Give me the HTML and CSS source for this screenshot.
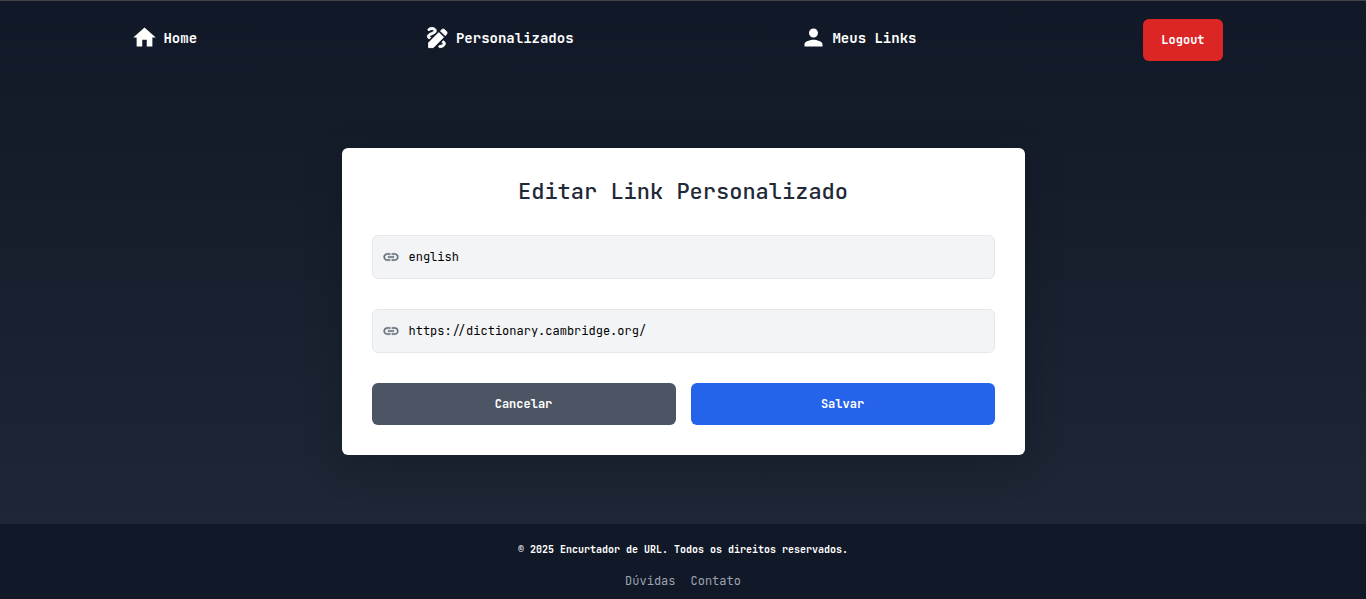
FILE: index.html
```
<!DOCTYPE html>
<html lang="pt-BR">
<head>
<meta charset="utf-8">
<meta name="viewport" content="width=device-width, initial-scale=1">
<title>Editar Link Personalizado</title>
<link rel="stylesheet" href="styles.css">
</head>
<body>
<header class="navbar">
  <nav class="nav">
    <a class="nav-link" href="#">
      <svg class="nav-icon" viewBox="0 0 24 24" aria-hidden="true"><path d="M10 20v-6h4v6h5v-8h3L12 3 2 12h3v8z"/></svg>
      Home
    </a>
    <a class="nav-link" href="#">
      <svg class="nav-icon nav-icon-bold" viewBox="0 0 24 24" aria-hidden="true"><path d="M18.85 10.39l1.06-1.06c.78-.78.78-2.05 0-2.83L18.5 5.09c-.78-.78-2.05-.78-2.83 0l-1.06 1.06 4.24 4.24zM13.19 7.57L4 16.76V21h4.24l9.19-9.19-4.24-4.24zM19 17.5c0 2.19-2.54 3.5-5 3.5-.55 0-1-.45-1-1s.45-1 1-1c1.54 0 3-.73 3-1.5 0-.47-.48-.87-1.23-1.2l1.48-1.48c1.07.63 1.75 1.47 1.75 2.68zM4.58 13.35C3.61 12.79 3 12.06 3 11c0-1.8 1.89-2.63 3.56-3.36C7.59 7.18 9 6.56 9 6c0-.41-.78-1-2-1-1.26 0-1.8.61-1.83.64-.35.41-.98.46-1.4.12-.41-.34-.49-.95-.15-1.38C3.73 4.24 4.76 3 7 3s4 1.32 4 3c0 1.87-1.93 2.72-3.64 3.47C6.42 9.88 5 10.5 5 11c0 .31.43.6 1.07.86l-1.49 1.49z"/></svg>
      Personalizados
    </a>
    <a class="nav-link" href="#">
      <svg class="nav-icon" viewBox="0 0 24 24" aria-hidden="true"><path d="M12 12c2.21 0 4-1.79 4-4s-1.79-4-4-4-4 1.790-4 4 1.790 4 4 4zm0 2c-2.670 0-8 1.340-8 4v2h16v-2c0-2.660-5.330-4-8-4z"/></svg>
      Meus Links
    </a>
    <button class="button button-danger" type="button">Logout</button>
  </nav>
</header>

<main class="content">
  <form class="card">
    <h1 class="card-title">Editar Link Personalizado</h1>
    <label class="field">
      <svg class="field-icon" viewBox="0 0 24 24" aria-hidden="true"><path d="M3.900 12c0-1.710 1.390-3.100 3.100-3.100h4V7H7c-2.760 0-5 2.240-5 5s2.240 5 5 5h4v-1.900H7c-1.710 0-3.100-1.390-3.100-3.100zM8 13h8v-2H8v2zm9-6h-4v1.900h4c1.710 0 3.100 1.390 3.100 3.100s-1.390 3.100-3.100 3.100h-4V17h4c2.760 0 5-2.240 5-5s-2.240-5-5-5z"/></svg>
      <input class="field-input" type="text" name="alias" aria-label="Nome do link" value="english">
    </label>
    <label class="field">
      <svg class="field-icon" viewBox="0 0 24 24" aria-hidden="true"><path d="M3.900 12c0-1.710 1.390-3.100 3.100-3.100h4V7H7c-2.760 0-5 2.240-5 5s2.240 5 5 5h4v-1.900H7c-1.710 0-3.100-1.390-3.100-3.100zM8 13h8v-2H8v2zm9-6h-4v1.900h4c1.710 0 3.100 1.390 3.100 3.100s-1.390 3.100-3.100 3.100h-4V17h4c2.760 0 5-2.240 5-5s-2.240-5-5-5z"/></svg>
      <input class="field-input" type="url" name="url" aria-label="URL de destino" value="https://dictionary.cambridge.org/">
    </label>
    <div class="actions">
      <button class="button button-neutral" type="button">Cancelar</button>
      <button class="button button-primary" type="submit">Salvar</button>
    </div>
  </form>
</main>

<footer class="footer">
  <p class="copyright">© 2025 Encurtador de URL. Todos os direitos reservados.</p>
  <div class="footer-links">
    <a class="footer-link" href="#">Dúvidas</a>
    <a class="footer-link" href="#">Contato</a>
  </div>
</footer>
</body>
</html>
```
FILE: styles.css
```
*, *::before, *::after {
  box-sizing: border-box;
}

body {
  margin: 0;
  min-height: 100vh;
  display: flex;
  flex-direction: column;
  border-top: 1px solid #444;
  background: linear-gradient(to bottom, #111827, #1f2937);
  color: #fff;
  font-family: "JetBrains Mono", "DejaVu Sans Mono", "Liberation Mono", monospace;
  font-size: 12px;
}

.navbar {
  padding: 18px 30px 18px 18px;
}

.nav {
  display: flex;
  justify-content: space-around;
  align-items: flex-start;
}

.nav-link {
  display: flex;
  align-items: center;
  gap: 5px;
  padding-top: 5px;
  color: #fff;
  font-size: 14px;
  font-weight: 700;
  line-height: 20px;
  text-decoration: none;
}

.nav-icon {
  width: 27px;
  height: 27px;
  fill: currentColor;
}

.nav-icon-bold {
  stroke: currentColor;
  stroke-width: 0.7;
}

.button {
  height: 42px;
  padding: 0 18px;
  border: 0;
  border-radius: 6px;
  color: #fff;
  font: inherit;
  font-weight: 700;
  cursor: pointer;
}

.button-danger {
  background: #dc2626;
}

.button-neutral {
  background: #4b5563;
}

.button-primary {
  background: #2563eb;
}

.content {
  flex: 1;
  display: flex;
  justify-content: center;
  align-items: center;
}

.card {
  display: flex;
  flex-direction: column;
  gap: 30px;
  width: 50%;
  padding: 30px;
  border-radius: 6px;
  background: #fff;
  box-shadow: 0 10px 40px rgba(0, 0, 0, 0.2);
}

.card-title {
  margin: 0;
  color: #1f2937;
  font-size: 22px;
  font-weight: 500;
  line-height: 27px;
  text-align: center;
}

.field {
  display: flex;
  align-items: center;
  gap: 9px;
  height: 44px;
  padding: 0 9px;
  border: 1px solid #e5e7eb;
  border-radius: 6px;
  background: #f3f4f6;
}

.field-icon {
  flex: none;
  width: 18px;
  height: 18px;
  fill: #6b7280;
  stroke: #6b7280;
  stroke-width: 0.4;
}

.field-input {
  flex: 1;
  min-width: 0;
  padding: 0;
  border: 0;
  outline: 0;
  background: transparent;
  color: #000;
  font: inherit;
}

.actions {
  display: grid;
  grid-template-columns: 1fr 1fr;
  gap: 15px;
}

.footer {
  display: flex;
  flex-direction: column;
  align-items: center;
  gap: 15px;
  padding: 18px 20px 9px;
  background: #111827;
}

.copyright {
  margin: 0;
  font-size: 10px;
  font-weight: 700;
  line-height: 15px;
}

.footer-links {
  display: flex;
  gap: 15px;
}

.footer-link {
  color: #9ca3af;
  line-height: 18px;
  text-decoration: none;
}
```
